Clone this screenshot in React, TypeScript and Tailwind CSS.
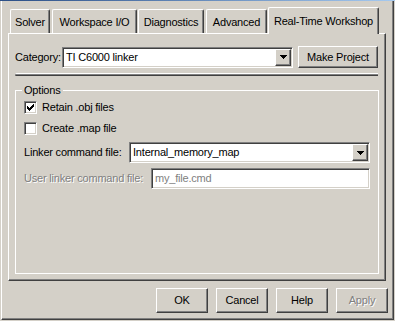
import React from "react";

// classic win2k bevels
const raised =
  "border border-t-white border-l-white border-r-[#404040] border-b-[#404040] shadow-[inset_-1px_-1px_0_#808080]";
const sunken =
  "border border-t-[#808080] border-l-[#808080] border-r-white border-b-white shadow-[inset_1px_1px_0_#404040,inset_-1px_-1px_0_#d4d0c8]";
const disabledText = "text-[#808080] [text-shadow:1px_1px_0_#fff]";
const tab =
  "h-[24px] border border-b-0 border-t-white border-l-white border-r-[#404040] shadow-[inset_-1px_0_0_#808080] rounded-t-[2px] flex justify-center pt-[7px] whitespace-nowrap";

function Arrow() {
  return (
    <svg width="7" height="4" viewBox="0 0 7 4" shapeRendering="crispEdges">
      <path d="M0 0h7v1H0zM1 1h5v1H1zM2 2h3v1H2zM3 3h1v1H3z" fill="#000" />
    </svg>
  );
}

function Combo({ value, className }: { value: string; className: string }) {
  return (
    <div className={`${sunken} bg-white p-px flex items-center ${className}`}>
      <span className="flex-1 pl-[2px] truncate">{value}</span>
      <div className={`${raised} bg-[#d4d0c8] w-[16px] h-full flex items-center justify-center`}>
        <Arrow />
      </div>
    </div>
  );
}

function Check({ checked, label }: { checked?: boolean; label: string }) {
  return (
    <div className="flex items-center h-[13px]">
      <div className={`${sunken} bg-white w-[13px] h-[13px] flex items-center justify-center`}>
        {checked && (
          <svg width="7" height="7" viewBox="0 0 7 7" shapeRendering="crispEdges">
            <path
              d="M0 2h1v3H0zM1 3h1v3H1zM2 4h1v3H2zM3 3h1v3H3zM4 2h1v3H4zM5 1h1v3H5zM6 0h1v3H6z"
              fill="#000"
            />
          </svg>
        )}
      </div>
      <span className="ml-[5px]">{label}</span>
    </div>
  );
}

function Button({ label, disabled }: { label: string; disabled?: boolean }) {
  return (
    <div
      className={`${raised} w-[52px] h-[25px] flex items-center justify-center ${
        disabled ? disabledText : ""
      }`}
    >
      {label}
    </div>
  );
}

export default function App() {
  return (
    <div className="w-[395px] h-[321px] bg-[#d4d0c8] flex flex-col text-[11px] leading-none tracking-[-0.2px] text-black font-['Liberation_Sans',Arial,sans-serif] overflow-hidden">
      {/* title bar remains */}
      <div className="h-px bg-linear-to-r from-[#2c4f86] to-[#a6caf0]" />

      <div className="ml-px w-[393px] h-[319px] flex flex-col border-l border-r border-b border-l-white border-r-[#404040] border-b-[#404040] shadow-[inset_-1px_-1px_0_#808080] pl-[6px] pt-[6px]">
        {/* Tabs */}
        <div className="flex items-end h-[26px]">
          <div className={`ml-[2px] w-[40px] ${tab}`}>Solver</div>
          <div className={`ml-[2px] w-[85px] ${tab}`}>Workspace I/O</div>
          <div className={`ml-[1px] w-[66px] ${tab}`}>Diagnostics</div>
          <div className={`ml-[2px] w-[61px] ${tab}`}>Advanced</div>
          <div className={`relative z-10 -mb-px ml-[1px] w-[111px] ${tab} h-[27px] bg-[#d4d0c8] pt-[8px]`}>
            Real-Time Workshop
          </div>
        </div>

        {/* Panel */}
        <div className={`w-[378px] h-[248px] ${raised} flex flex-col pl-[6px] pt-[12px]`}>
          <div className="flex items-center h-[22px]">
            <span className="w-[47px]">Category:</span>
            <Combo value="TI C6000 linker" className="w-[231px] h-[21px]" />
            <div className={`${raised} ml-[5px] w-[80px] h-[22px] flex items-center justify-center`}>
              Make Project
            </div>
          </div>

          <div className="mt-[5px] w-[363px] h-[3px] border-t border-t-white bg-[#808080] border-b border-b-[#404040] rounded-l-[2px]" />

          {/* Options group */}
          <div className="relative mt-[14px] w-[364px] h-[184px] border border-white pl-[8px] pt-[10px] flex flex-col">
            <span className="absolute left-[6px] -top-[6px] px-[2px] bg-[#d4d0c8]">Options</span>
            <Check checked label="Retain .obj files" />
            <div className="mt-[8px]">
              <Check label="Create .map file" />
            </div>
            <div className="mt-[7px] flex items-center">
              <span className="w-[105px]">Linker command file:</span>
              <Combo value="Internal_memory_map" className="w-[241px] h-[21px]" />
            </div>
            <div className="mt-[5px] flex items-center">
              <span className={`w-[127px] ${disabledText}`}>User linker command file:</span>
              <div className={`${sunken} bg-white w-[219px] h-[21px] flex items-center pl-[3px] text-[#808080]`}>
                my_file.cmd
              </div>
            </div>
          </div>
        </div>

        {/* Buttons */}
        <div className="mt-[7px] flex justify-end gap-[8px] pr-[5px]">
          <Button label="OK" />
          <Button label="Cancel" />
          <Button label="Help" />
          <Button label="Apply" disabled />
        </div>
      </div>
    </div>
  );
}
